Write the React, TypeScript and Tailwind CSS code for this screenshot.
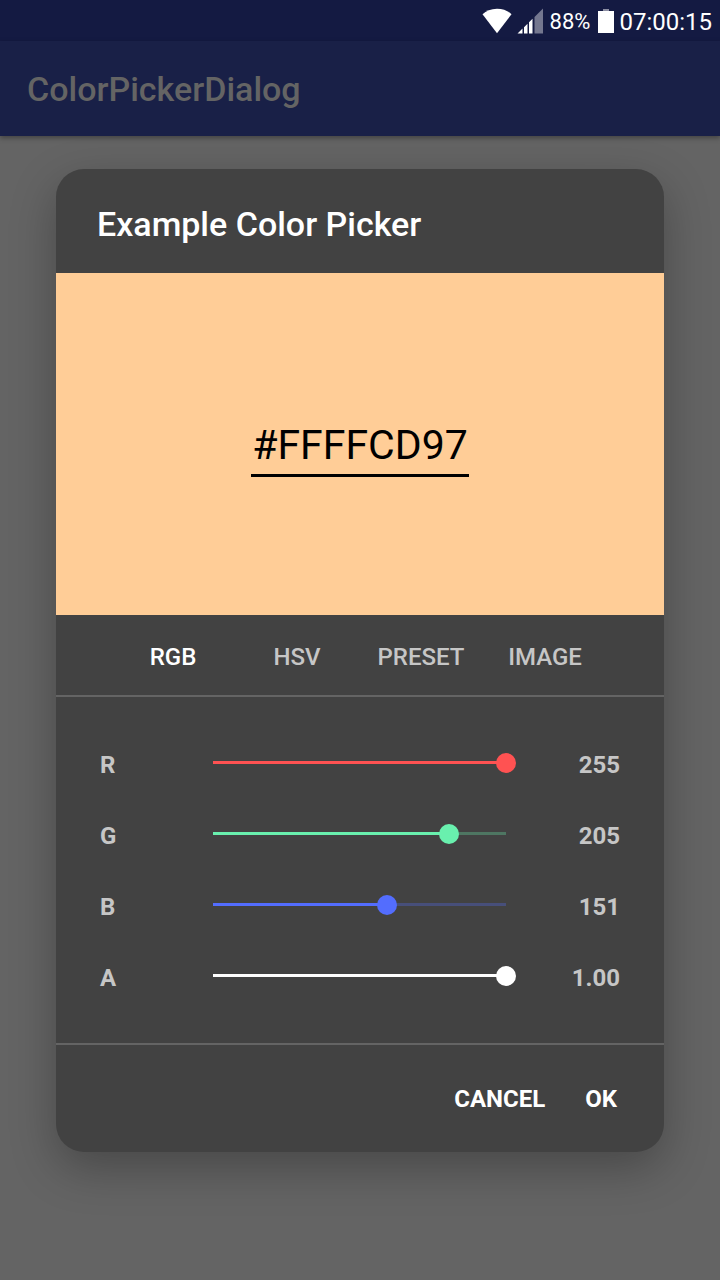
import { useState } from "react";

type Channel = {
  id: string;
  max: number;
  step: number;
  initial: number;
  color: string;
  faded: string;
  thumb: string;
  digits: number;
};

const channels: Channel[] = [
  { id: "R", max: 255, step: 1, initial: 255, color: "#ff5252", faded: "#7b4747", thumb: "[&::-webkit-slider-thumb]:bg-[#ff5252]", digits: 0 },
  { id: "G", max: 255, step: 1, initial: 205, color: "#69f0ae", faded: "#4e7662", thumb: "[&::-webkit-slider-thumb]:bg-[#69f0ae]", digits: 0 },
  { id: "B", max: 255, step: 1, initial: 151, color: "#536dfe", faded: "#474f7a", thumb: "[&::-webkit-slider-thumb]:bg-[#536dfe]", digits: 0 },
  { id: "A", max: 1, step: 0.01, initial: 1, color: "#ffffff", faded: "#7b7b7b", thumb: "[&::-webkit-slider-thumb]:bg-white", digits: 2 },
];

const tabs = ["RGB", "HSV", "PRESET", "IMAGE"];

function StatusBar() {
  return (
    <div className="flex h-[41px] items-center justify-end bg-[#141a42] pr-2 text-white">
      <svg className="mr-[5px] h-[26px] w-[30px]" viewBox="0 0 30 26" fill="currentColor" aria-hidden="true">
        <path d="M0.5 6.2C4 2.8 9 0.7 15 0.7s11 2.1 14.5 5.5L15 25.2z" />
      </svg>
      <svg className="mr-[6px] h-[26px] w-[27px]" viewBox="0 0 27 26" aria-hidden="true">
        <path d="M26 0.5V25.5H17.5V9z" fill="#74778f" />
        <path d="M0.5 25.5L5.5 20.6V25.5zM7 25.5V19.2L10.5 15.7V25.5zM12 25.5V14.3L15.5 10.8V25.5z" fill="#fff" />
      </svg>
      <span className="mt-[2px] text-[22px] leading-6">88%</span>
      <svg className="mr-[5px] ml-2 h-6 w-4" viewBox="0 0 16 24" aria-hidden="true">
        <path d="M5 0h6v2H5z" fill="#8d8fa3" />
        <path d="M0 2h16v22H0z" fill="#fff" />
      </svg>
      <span className="mt-[2px] text-2xl leading-6">07:00:15</span>
    </div>
  );
}

export default function App() {
  const [values, setValues] = useState(channels.map((c) => c.initial));
  const [hex, setHex] = useState("#FFFFCD97");
  const [tab, setTab] = useState("RGB");

  return (
    <div className="flex min-h-screen flex-col bg-[#646464] font-['Roboto',sans-serif]">
      <StatusBar />
      <header className="flex h-[95px] items-center bg-[#192047] px-[27px] pt-[2px] shadow-[0_2px_5px_rgba(0,0,0,0.35)]">
        <h1 className="text-[34px] font-medium text-[#646464]">ColorPickerDialog</h1>
      </header>

      <section
        role="dialog"
        aria-labelledby="dialog-title"
        className="mx-14 mt-[33px] mb-32 overflow-hidden rounded-[28px] bg-[#424242] shadow-[0_16px_46px_rgba(0,0,0,0.28)]"
      >
        <div className="flex h-[104px] items-center px-[41px] pt-1.5">
          <h2 id="dialog-title" className="text-[34px] font-medium text-white">Example Color Picker</h2>
        </div>

        <div className="flex h-[342px] items-center justify-center bg-[#ffcd97]">
          <input
            aria-label="Color value"
            value={hex}
            onChange={(e) => setHex(e.target.value)}
            className="h-[66px] w-[218px] border-b-[3px] border-black bg-transparent pt-1 text-center text-[41px] text-black outline-none"
          />
        </div>

        <div role="tablist" className="grid h-[82px] grid-cols-4 border-b-2 border-[#646464] pr-[57px] pl-[55px] pt-1">
          {tabs.map((name) => (
            <button
              key={name}
              role="tab"
              aria-selected={tab === name}
              onClick={() => setTab(name)}
              className={tab === name ? "text-2xl font-medium text-white" : "text-2xl font-medium text-[#c6c6c6]"}
            >
              {name}
            </button>
          ))}
        </div>

        <div className="border-b-2 border-[#646464] px-11 pt-[30px] pb-8">
          {channels.map((c, i) => {
            const pct = (values[i] / c.max) * 100;
            return (
              <div key={c.id} className="grid h-[71px] grid-cols-[103px_1fr_104px] items-center text-2xl font-bold text-[#c6c6c6]">
                <label htmlFor={c.id} className="pt-[5px]">{c.id}</label>
                <input
                  id={c.id}
                  type="range"
                  min={0}
                  max={c.max}
                  step={c.step}
                  value={values[i]}
                  onChange={(e) => setValues(values.map((v, j) => (j === i ? Number(e.target.value) : v)))}
                  style={{ backgroundImage: `linear-gradient(to right, ${c.color} ${pct}%, ${c.faded} ${pct}%)` }}
                  className={`h-5 w-full min-w-0 appearance-none bg-transparent bg-[length:calc(100%-20px)_3px] bg-center bg-no-repeat [&::-webkit-slider-thumb]:size-5 [&::-webkit-slider-thumb]:appearance-none [&::-webkit-slider-thumb]:rounded-full ${c.thumb}`}
                />
                <output htmlFor={c.id} className="pt-[5px] text-right">{values[i].toFixed(c.digits)}</output>
              </div>
            );
          })}
        </div>

        <div className="flex h-[107px] items-center justify-end gap-10 px-[47px] text-2xl font-bold text-white">
          <button>CANCEL</button>
          <button>OK</button>
        </div>
      </section>
    </div>
  );
}
